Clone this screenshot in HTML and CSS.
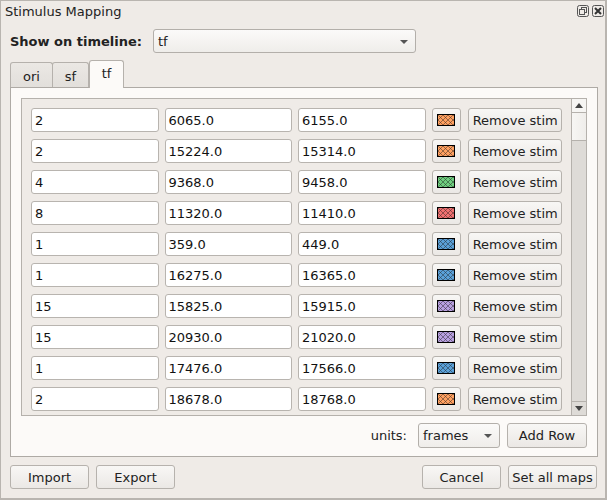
FILE: index.html
```html
<!DOCTYPE html>
<html>
<head>
<meta charset="utf-8">
<link rel="stylesheet" href="styles.css">
</head>
<body>
<div class="window">
  <div class="titlebar">
    <span class="title">Stimulus Mapping</span>
    <span class="title-btns">
      <svg width="12" height="12" viewBox="0 0 12 12"><rect x="0.5" y="0.5" width="11" height="11" rx="2" fill="none" stroke="#555" /><rect x="4.5" y="2.5" width="5" height="5" fill="none" stroke="#555"/><rect x="2.5" y="4.5" width="5" height="5" fill="#efebe7" stroke="#555"/></svg>
      <svg width="12" height="12" viewBox="0 0 12 12"><rect x="0.5" y="0.5" width="11" height="11" rx="2" fill="none" stroke="#555" /><path d="M3 3 L9 9 M9 3 L3 9" stroke="#333" stroke-width="2"/></svg>
    </span>
  </div>
  <div class="show-row">
    <span class="show-label">Show on timeline:</span>
    <div class="combo big"><span>tf</span><span class="arrow"></span></div>
  </div>
  <div class="tabs">
    <div class="tab">ori</div>
    <div class="tab">sf</div>
    <div class="tab active">tf</div>
  </div>
  <div class="pane">
    <div class="scroll">
      <div class="rows" id="rows"></div>
      <div class="vbar">
        <div class="vbtn up"><span class="tri-up"></span></div>
        <div class="handle"></div>
        <div class="trough"></div>
        <div class="vbtn down"><span class="tri-down"></span></div>
      </div>
    </div>
    <div class="units-row">
      <span class="units-label">units:</span>
      <div class="combo small"><span>frames</span><span class="arrow"></span></div>
      <div class="btn add">Add Row</div>
    </div>
  </div>
  <div class="actions">
    <div class="btn act">Import</div>
    <div class="btn act">Export</div>
    <span class="spacer"></span>
    <div class="btn act">Cancel</div>
    <div class="btn act wide">Set all maps</div>
  </div>
</div>
<script src="app.js"></script>
</body>
</html>
```
FILE: app.js
```js
const data = [
  ["2","6065.0","6155.0","#ffa060"],
  ["2","15224.0","15314.0","#ffa060"],
  ["4","9368.0","9458.0","#6fcf7f"],
  ["8","11320.0","11410.0","#f07070"],
  ["1","359.0","449.0","#5aa0d8"],
  ["1","16275.0","16365.0","#5aa0d8"],
  ["15","15825.0","15915.0","#b8a0e0"],
  ["15","20930.0","21020.0","#b8a0e0"],
  ["1","17476.0","17566.0","#5aa0d8"],
  ["2","18678.0","18768.0","#ffa060"]
];
const rows = document.getElementById("rows");
data.forEach((d, i) => {
  const r = document.createElement("div");
  r.className = "row";
  r.innerHTML =
    `<div class="field f1">${d[0]}</div><div class="field f2">${d[1]}</div><div class="field f3">${d[2]}</div>` +
    `<div class="btn swbtn"><svg width="18" height="12" viewBox="0 0 18 12">` +
    `<defs><pattern id="p${i}" patternUnits="userSpaceOnUse" width="5" height="5" x="1" y="1">` +
    `<rect width="5" height="5" fill="${d[3]}"/>` +
    `<path d="M0 0 L5 5 M5 0 L0 5" stroke="#1a1a1a" stroke-width="0.6" opacity="0.75"/></pattern></defs>` +
    `<rect x="0.5" y="0.5" width="17" height="11" fill="url(#p${i})" stroke="#000"/></svg></div>` +
    `<div class="btn remove">Remove stim</div>`;
  rows.appendChild(r);
});
```
FILE: styles.css
```css
* { box-sizing: border-box; }
html, body { margin: 0; padding: 0; }
body { background: #efebe7; }
.window {
  width: 607px; height: 500px;
  background: #efebe7;
  border: 1px solid #b9b5b0;
  border-right-width: 2px;
  border-bottom-width: 2px;
  font-family: "DejaVu Sans", sans-serif;
  font-size: 13px;
  color: #222;
  display: flex; flex-direction: column;
  overflow: hidden;
}
.titlebar {
  height: 21px; display: flex; align-items: center;
  padding-left: 4px; padding-right: 1px;
}
.title { flex: 1; }
.title-btns { display: flex; gap: 3px; margin-top: -2px; }
.title-btns svg { display: block; }

.show-row { display: flex; align-items: center; margin-top: 7px; padding-left: 9px; height: 24px; }
.show-label { font-weight: bold; width: 143px; }

.combo {
  height: 24px; display: flex; align-items: center; justify-content: space-between;
  border: 1px solid #b3afaa; border-radius: 3px;
  background: linear-gradient(#fbfaf9, #efedea);
  padding: 0 7px 0 4px;
}
.combo.big { width: 263px; }
.combo.small { width: 82px; }
.arrow { width: 0; height: 0; border-left: 4px solid transparent; border-right: 4px solid transparent; border-top: 4px solid #555; margin-top: 1px; }

.tabs { display: flex; align-items: flex-end; margin-top: 7px; padding-left: 9px; height: 27px; position: relative; z-index: 1; }
.tab {
  height: 25px; border: 1px solid #b5b1ac; border-bottom: none;
  border-radius: 3px 3px 0 0;
  background: linear-gradient(#ebe8e4, #e2dfdb);
  display: flex; align-items: center; justify-content: center;
  padding-top: 2px;
}
.tab:nth-child(1) { width: 43px; }
.tab:nth-child(2) { width: 37px; margin-left: -1px; }
.tab.active {
  width: 35px; height: 28px; margin-left: 0; padding-top: 0; padding-bottom: 2px;
  background: #fcfaf8; margin-bottom: -1px;
}

.pane {
  margin-left: 9px; width: 588px; height: 370px;
  border: 1px solid #aeaaa5; background: #fcfaf8;
  padding: 10px 10px 8px 10px;
  display: flex; flex-direction: column;
}
.scroll {
  height: 318px; border: 1px solid #b5b1ac; background: #efebe7;
  display: flex; overflow: hidden;
}
.rows { flex: 1; padding: 9px 9px 0 9px; display: flex; flex-direction: column; gap: 7px; overflow: hidden; }
.row { display: flex; gap: 6px; height: 24px; flex: none; }
.field {
  height: 24px; background: #fff; border: 1px solid #b8b4af; border-radius: 3px;
  padding-left: 3px; display: flex; align-items: center; color: #111;
}
.f1 { width: 128px; }
.f2 { width: 128px; }
.f3 { width: 128px; }
.btn {
  height: 24px; border: 1px solid #b6b2ad; border-radius: 3px;
  background: linear-gradient(#f8f7f5, #ebe8e5);
  display: flex; align-items: center; justify-content: center; color: #222;
}
.swbtn { width: 30px; }
.swbtn svg { display: block; }
.remove { width: 94px; margin-left: 1px; }

.vbar { width: 15px; display: flex; flex-direction: column; border-left: 1px solid #b5b1ac; background: #dedbd7; }
.vbtn { height: 14px; background: #f6f5f3; display: flex; align-items: center; justify-content: center; }
.vbtn.up { border-bottom: 1px solid #b5b1ac; }
.vbtn.down { border-top: 1px solid #b5b1ac; background: #dedbd7; }
.handle { height: 28px; background: linear-gradient(90deg, #f7f6f4, #efedea); border-bottom: 1px solid #b5b1ac; }
.trough { flex: 1; }
.tri-up { width: 0; height: 0; border-left: 4px solid transparent; border-right: 4px solid transparent; border-bottom: 5px solid #444; }
.tri-down { width: 0; height: 0; border-left: 4px solid transparent; border-right: 4px solid transparent; border-top: 5px solid #444; }

.units-row { display: flex; align-items: center; justify-content: flex-end; margin-top: 7px; height: 25px; }
.units-label { margin-right: 11px; }
.combo.small { height: 25px; }
.add { width: 80px; height: 25px; margin-left: 7px; }

.actions { display: flex; margin-top: 8px; padding-left: 9px; padding-right: 8px; gap: 7px; }
.act { width: 79px; }
.wide { width: 89px; }
.spacer { flex: 1; }
```
